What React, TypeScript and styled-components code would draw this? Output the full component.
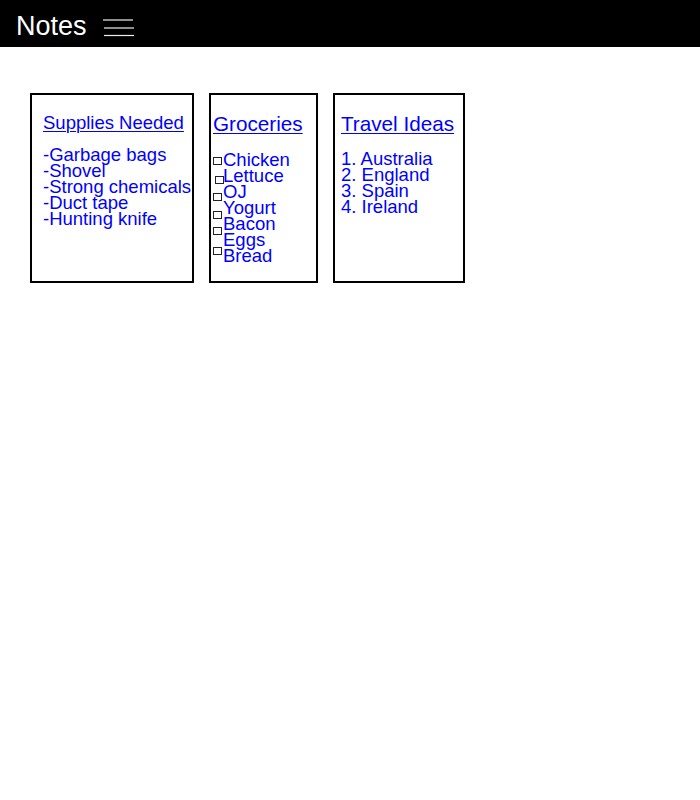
import styled, { createGlobalStyle } from 'styled-components';

const GlobalStyle = createGlobalStyle`
  body {
    margin: 0;
    background: #fff;
    font-family: "Liberation Sans", Arial, sans-serif;
  }
`;

const Header = styled.header`
  height: 47px;
  background-color: #000;
  display: flex;
  align-items: center;
  padding-left: 16px;
  gap: 16px;
`;

const Brand = styled.span`
  color: #fff;
  font-size: 27px;
  line-height: 30px;
  margin-top: 4px;
`;

const MenuIcon = styled.svg`
  width: 32px;
  height: 20px;
  margin-top: 10px;
`;

const Board = styled.main`
  display: flex;
  align-items: flex-start;
  gap: 15px;
  padding: 46px 0 0 30px;
`;

const Card = styled.section<{ $w: number; $pl: number }>`
  box-sizing: border-box;
  width: ${p => p.$w}px;
  height: 190px;
  border: 2px solid #000;
  padding: 18px 0 0 ${p => p.$pl}px;
  color: #0000ff;
`;

const Title = styled.div<{ $big?: boolean; $gap: number }>`
  font-size: ${p => (p.$big ? '20.7px' : '18.5px')};
  line-height: ${p => (p.$big ? '22px' : '20px')};
  text-decoration: underline;
  text-decoration-thickness: 1px;
  text-underline-offset: 2px;
  margin-bottom: ${p => p.$gap}px;
  white-space: nowrap;
`;

const Lines = styled.div`
  font-size: 18.5px;
  line-height: 16px;
  white-space: nowrap;
`;

const CheckList = styled.div`
  display: grid;
  grid-template-columns: 10px auto;
  column-gap: 0;
`;

const Boxes = styled.div`
  display: flex;
  flex-direction: column;
  padding-top: 5px;
`;

const Box = styled.span<{ $dx?: number; $mt: number }>`
  display: block;
  box-sizing: border-box;
  width: 9px;
  height: 8px;
  border: 1px solid #222;
  background: #fff;
  margin-left: ${p => p.$dx ?? 0}px;
  margin-top: ${p => p.$mt}px;
`;

const supplies = ['-Garbage bags', '-Shovel', '-Strong chemicals', '-Duct tape', '-Hunting knife'];
const groceries = ['Chicken', 'Lettuce', 'OJ', 'Yogurt', 'Bacon', 'Eggs', 'Bread'];
const boxes = [
  { mt: 0 },
  { mt: 11, dx: 2 },
  { mt: 9 },
  { mt: 10 },
  { mt: 8 },
  { mt: 12 },
];
const travel = ['1. Australia', '2. England', '3. Spain', '4. Ireland'];

export default function App() {
  return (
    <>
      <GlobalStyle />
      <Header>
        <Brand>Notes</Brand>
        <MenuIcon viewBox="0 0 32 20">
          <line x1="0" y1="1" x2="30" y2="1" stroke="#eee" strokeWidth="1.2" />
          <line x1="1" y1="9" x2="31" y2="9" stroke="#eee" strokeWidth="1.2" />
          <line x1="1" y1="16.5" x2="31" y2="16.5" stroke="#eee" strokeWidth="1.2" />
        </MenuIcon>
      </Header>
      <Board>
        <Card $w={164} $pl={11}>
          <Title $gap={14}>Supplies Needed</Title>
          <Lines>
            {supplies.map(s => (
              <div key={s}>{s}</div>
            ))}
          </Lines>
        </Card>
        <Card $w={109} $pl={2}>
          <Title $big $gap={17}>Groceries</Title>
          <CheckList>
            <Boxes>
              {boxes.map((b, i) => (
                <Box key={i} $mt={b.mt} $dx={b.dx} />
              ))}
            </Boxes>
            <Lines>
              {groceries.map(g => (
                <div key={g}>{g}</div>
              ))}
            </Lines>
          </CheckList>
        </Card>
        <Card $w={132} $pl={6}>
          <Title $big $gap={16}>Travel Ideas</Title>
          <Lines>
            {travel.map(t => (
              <div key={t}>{t}</div>
            ))}
          </Lines>
        </Card>
      </Board>
    </>
  );
}
